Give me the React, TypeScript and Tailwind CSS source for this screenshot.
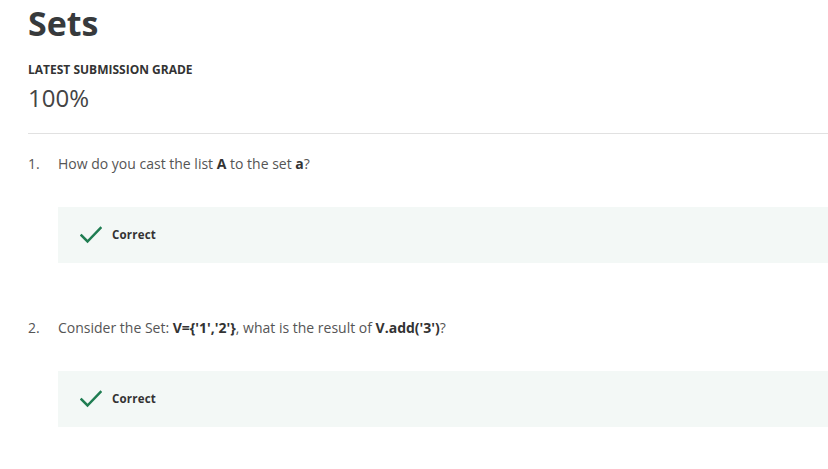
import React from 'react';

function CheckIcon() {
  return (
    <svg width="22" height="18" viewBox="0 0 22 18" fill="none">
      <path d="M1.5 9.5 L7.5 15.5 L20.5 2" stroke="#1f7d52" strokeWidth="2.5" strokeLinecap="square" />
    </svg>
  );
}

function CorrectBox() {
  return (
    <div className="ml-[30px] h-[56px] bg-[#f3f8f6] flex items-center pl-[22px]">
      <CheckIcon />
      <span className="ml-[10px] text-[11.5px] font-bold text-[#333] tracking-[0.2px]">Correct</span>
    </div>
  );
}

function Question({ num, children }: { num: string; children: React.ReactNode }) {
  return (
    <div>
      <div className="flex items-center h-[20px] text-[14px] text-[#555]">
        <span className="w-[30px]">{num}</span>
        <span>{children}</span>
      </div>
      <div className="h-[34px]" />
      <CorrectBox />
    </div>
  );
}

export default function App() {
  return (
    <div className="w-[828px] h-[469px] bg-white overflow-hidden pl-[28px] pt-[2px]" style={{ fontFamily: '"Open Sans", sans-serif' }}>
      <h1 className="text-[34px] leading-[43px] font-bold text-[#373a3c]">Sets</h1>
      <div className="mt-[17px] text-[12px] font-bold text-[#333] leading-[16px]">LATEST SUBMISSION GRADE</div>
      <div className="mt-[6px] text-[24px] leading-[28px] text-[#444]">100%</div>
      <div className="mt-[21px] h-px bg-[#e1e1e1]" />
      <div className="mt-[19px] space-y-[54px]">
        <Question num="1.">
          How do you cast the list <b className="text-[#333]">A</b> to the set <b className="text-[#333]">a</b>?
        </Question>
        <Question num="2.">
          Consider the Set: <b className="text-[#333]">V={"{'1','2'}"}</b>, what is the result of <b className="text-[#333]">V.add('3')</b>?
        </Question>
      </div>
    </div>
  );
}
